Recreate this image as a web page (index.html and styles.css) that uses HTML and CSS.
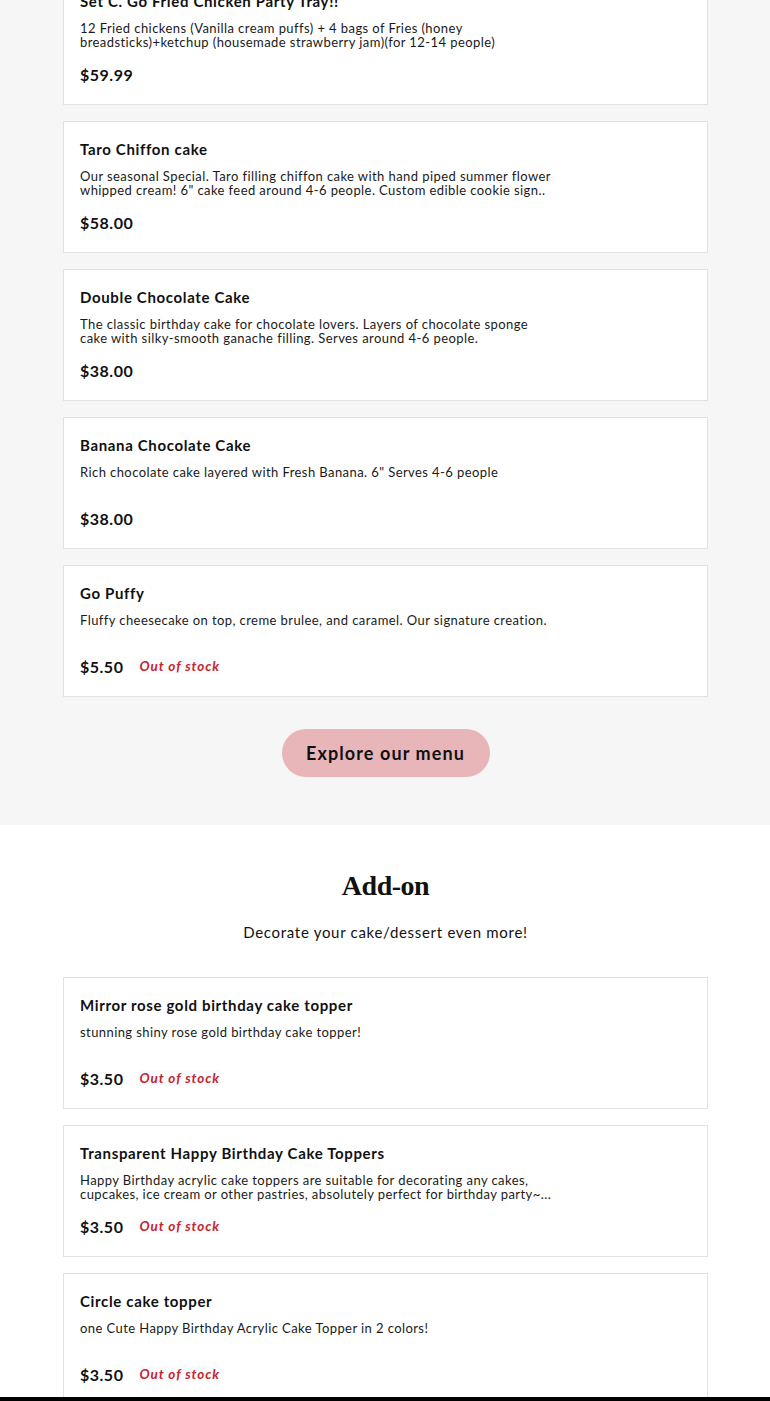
FILE: index.html
```html
<!DOCTYPE html>
<html>
<head>
<meta charset="utf-8">
<link rel="stylesheet" href="styles.css">
</head>
<body>
<section class="menu">
  <div class="list first">
    <div class="card">
      <div class="title">Set C. Go Fried Chicken Party Tray!!</div>
      <div class="desc">12 Fried chickens (Vanilla cream puffs) + 4 bags of Fries (honey breadsticks)+ketchup (housemade strawberry jam)(for 12-14 people)</div>
      <div class="price-row"><span class="price">$59.99</span></div>
    </div>
    <div class="card">
      <div class="title">Taro Chiffon cake</div>
      <div class="desc">Our seasonal Special. Taro filling chiffon cake with hand piped summer flower whipped cream! 6" cake feed around 4-6 people. Custom edible cookie sign..</div>
      <div class="price-row"><span class="price">$58.00</span></div>
    </div>
    <div class="card">
      <div class="title">Double Chocolate Cake</div>
      <div class="desc">The classic birthday cake for chocolate lovers. Layers of chocolate sponge cake with silky-smooth ganache filling. Serves around 4-6 people.</div>
      <div class="price-row"><span class="price">$38.00</span></div>
    </div>
    <div class="card">
      <div class="title">Banana Chocolate Cake</div>
      <div class="desc">Rich chocolate cake layered with Fresh Banana. 6" Serves 4-6 people</div>
      <div class="price-row"><span class="price">$38.00</span></div>
    </div>
    <div class="card">
      <div class="title">Go Puffy</div>
      <div class="desc">Fluffy cheesecake on top, creme brulee, and caramel. Our signature creation.</div>
      <div class="price-row"><span class="price">$5.50</span><span class="oos">Out of stock</span></div>
    </div>
  </div>
  <div class="btn-wrap"><a class="btn">Explore our menu</a></div>
</section>
<section class="addon">
  <h2 class="heading">Add-on</h2>
  <p class="sub">Decorate your cake/dessert even more!</p>
  <div class="list">
    <div class="card">
      <div class="title">Mirror rose gold birthday cake topper</div>
      <div class="desc">stunning shiny rose gold birthday cake topper!</div>
      <div class="price-row"><span class="price">$3.50</span><span class="oos">Out of stock</span></div>
    </div>
    <div class="card">
      <div class="title">Transparent Happy Birthday Cake Toppers</div>
      <div class="desc">Happy Birthday acrylic cake toppers are suitable for decorating any cakes, cupcakes, ice cream or other pastries, absolutely perfect for birthday party~...</div>
      <div class="price-row"><span class="price">$3.50</span><span class="oos">Out of stock</span></div>
    </div>
    <div class="card">
      <div class="title">Circle cake topper</div>
      <div class="desc">one Cute Happy Birthday Acrylic Cake Topper in 2 colors!</div>
      <div class="price-row"><span class="price">$3.50</span><span class="oos">Out of stock</span></div>
    </div>
  </div>
</section>
<div class="bottom-bar"></div>
</body>
</html>
```
FILE: styles.css
```css
html, body {
  margin: 0;
  padding: 0;
}
body {
  font-family: Lato, "Liberation Sans", sans-serif;
  color: #111;
  background: #fff;
  height: 1401px;
  overflow: hidden;
  position: relative;
}
.menu {
  background: #f6f6f6;
  padding: 0 62px 48px 63px;
  height: 825px;
  box-sizing: border-box;
  display: flex;
  flex-direction: column;
}
.list {
  display: flex;
  flex-direction: column;
  gap: 16px;
}
.list.first {
  margin-top: -27px;
}
.card {
  background: #fff;
  border: 1px solid #e2e2e2;
  padding: 17px 16px 20px 16px;
  height: 132px;
  box-sizing: border-box;
}
.title {
  font-size: 15px;
  font-weight: 700;
  line-height: 20px;
  letter-spacing: 0.65px;
}
.desc {
  margin-top: 10px;
  font-size: 13px;
  line-height: 14px;
  height: 28px;
  max-width: 475px;
  overflow: hidden;
  letter-spacing: 0.42px;
  color: #1a1a1a;
}
.price-row {
  margin-top: 15px;
  display: flex;
  align-items: center;
  gap: 16px;
  height: 20px;
}
.price {
  font-size: 16px;
  font-weight: 700;
  letter-spacing: 0.5px;
}
.oos {
  font-size: 13.5px;
  font-style: italic;
  font-weight: 700;
  color: #c4262e;
  letter-spacing: 0.9px;
  background: #fafbfc;
}
.btn-wrap {
  margin-top: 32px;
  display: flex;
  justify-content: center;
}
.btn {
  display: flex;
  align-items: center;
  justify-content: center;
  width: 208px;
  height: 48px;
  border-radius: 24px;
  background: #e8b6b9;
  font-size: 18px;
  font-weight: 700;
  letter-spacing: 1.1px;
  color: #111;
}
.addon {
  padding: 44px 62px 0 63px;
}
.heading {
  margin: 0;
  text-align: center;
  font-family: "Liberation Serif", "DejaVu Serif", serif;
  font-weight: 700;
  font-size: 28px;
  line-height: 34px;
  letter-spacing: -0.5px;
}
.sub {
  margin: 19px 0 35px;
  text-align: center;
  font-size: 15px;
  line-height: 20px;
  letter-spacing: 0.7px;
}
.bottom-bar {
  position: absolute;
  left: 0;
  right: 0;
  bottom: 0;
  height: 4px;
  background: #000;
}
```
